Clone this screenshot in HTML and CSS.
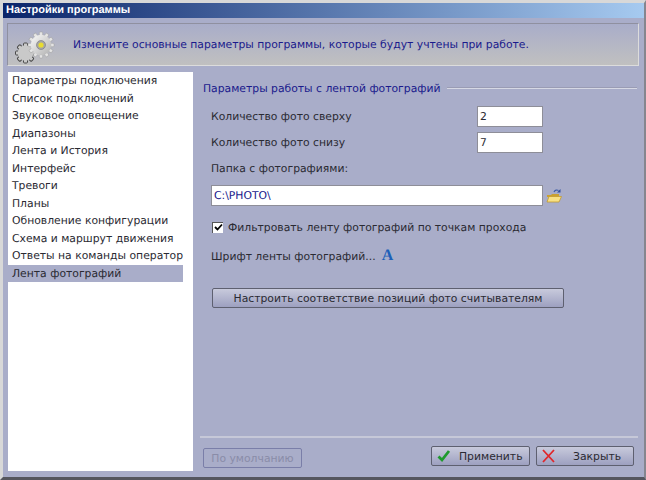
FILE: index.html
```html
<!DOCTYPE html>
<html lang="ru">
<head>
<meta charset="utf-8">
<title>Настройки программы</title>
<link rel="stylesheet" href="styles.css">
</head>
<body>
<div class="window">
  <div class="titlebar">Настройки программы</div>
  <div class="banner">
    <svg class="gears" width="40" height="34" viewBox="0 0 40 34">
      <defs>
        <linearGradient id="g1" x1="0" y1="0" x2="1" y2="1"><stop offset="0" stop-color="#fafafa"/><stop offset="1" stop-color="#b0b0b0"/></linearGradient>
      </defs>
      <g transform="translate(10.500 22)" fill="#c9c9c9" stroke="#4a4a4a" stroke-width="1">
        <rect x="-10" y="-2" width="20" height="4" rx="1"/>
        <rect x="-10" y="-2" width="20" height="4" rx="1" transform="rotate(45)"/>
        <rect x="-10" y="-2" width="20" height="4" rx="1" transform="rotate(90)"/>
        <rect x="-10" y="-2" width="20" height="4" rx="1" transform="rotate(135)"/>
        <circle r="7.800" stroke="none"/>
      </g>
      <g transform="translate(26 14)" fill="#e4e4e4" stroke="#9a9a9a" stroke-width=".5">
        <rect x="-13" y="-1.700" width="26" height="3.400" rx=".8"/>
        <rect x="-13" y="-1.700" width="26" height="3.400" rx=".8" transform="rotate(30)"/>
        <rect x="-13" y="-1.700" width="26" height="3.400" rx=".8" transform="rotate(60)"/>
        <rect x="-13" y="-1.700" width="26" height="3.400" rx=".8" transform="rotate(90)"/>
        <rect x="-13" y="-1.700" width="26" height="3.400" rx=".8" transform="rotate(120)"/>
        <rect x="-13" y="-1.700" width="26" height="3.400" rx=".8" transform="rotate(150)"/>
        <circle r="10.300" fill="url(#g1)" stroke="none"/>
        <circle r="4.500" fill="#a6a6a6" stroke="#777" stroke-width=".6"/>
        <circle r="2.600" fill="#e8dc30" stroke="none"/>
      </g>
    </svg>
    <span class="banner-text">Измените основные параметры программы, которые будут учтены при работе.</span>
  </div>
  <div class="main">
    <ul class="list">
      <li>Параметры подключения</li>
      <li>Список подключений</li>
      <li>Звуковое оповещение</li>
      <li>Диапазоны</li>
      <li>Лента и История</li>
      <li>Интерфейс</li>
      <li>Тревоги</li>
      <li>Планы</li>
      <li>Обновление конфигурации</li>
      <li>Схема и маршрут движения</li>
      <li>Ответы на команды оператор</li>
      <li class="selected">Лента фотографий</li>
    </ul>
    <div class="panel">
      <div class="group-title"><span>Параметры работы с лентой фотографий</span><i class="rule"></i></div>
      <div class="fields">
        <div class="field-row"><span>Количество фото сверху</span><div class="input small">2</div></div>
        <div class="field-row"><span>Количество фото снизу</span><div class="input small">7</div></div>
        <div class="folder-label">Папка с фотографиями:</div>
        <div class="folder-row">
          <div class="input wide">C:\PHOTO\</div>
          <svg class="folder" width="16" height="15" viewBox="0 0 16 15">
            <path d="M8 4C9 2 11 1.500 12.500 2.500" fill="none" stroke="#3a5aa8" stroke-width="1.200"/>
            <path d="M14.500 1v3.500h-3.500z" fill="#2f4f9f"/>
            <path d="M1 7h4l1-1h7v3H1z" fill="#c9a030"/>
            <path d="M1 14L3 8.500h12.500L13 14z" fill="#f8e184" stroke="#c29a30" stroke-width=".8"/>
          </svg>
        </div>
        <label class="check-row"><span class="checkbox"><svg width="9" height="9" viewBox="0 0 9 9"><path d="M1 4l2.500 2.500L8 1.500" fill="none" stroke="#000" stroke-width="1.800"/></svg></span>Фильтровать ленту фотографий по точкам прохода</label>
        <div class="font-row"><span>Шрифт ленты фотографий...</span><span class="font-a">A</span></div>
        <button class="btn map-btn">Настроить соответствие позиций фото считывателям</button>
      </div>
      <div class="footer">
        <button class="btn disabled">По умолчанию</button>
        <div class="footer-right">
          <button class="btn action"><svg width="14" height="14" viewBox="0 0 14 14"><path d="M1.500 7.500l3.500 3.500 7-9" fill="none" stroke="#1f9a2e" stroke-width="2.800"/></svg><span class="apply-label">Применить</span></button>
          <button class="btn action close-action"><svg width="14" height="14" viewBox="0 0 14 14"><path d="M1 1l11 12M12 1L1 13" fill="none" stroke="#e0262a" stroke-width="1.800"/></svg><span class="close-label">Закрыть</span></button>
        </div>
      </div>
    </div>
  </div>
</div>
</body>
</html>
```
FILE: styles.css
```css
* { box-sizing: border-box; }
html, body { margin: 0; padding: 0; }
body { width: 646px; height: 480px; overflow: hidden; font-family: "DejaVu Sans", sans-serif; text-rendering: geometricPrecision; }
.window {
  width: 646px; height: 480px;
  display: flex; flex-direction: column;
  background: #a9adc9;
  border-style: solid; border-width: 3px 2px 3px 3px;
  border-color: #d8d8d8 #85868f #55565e #d8d8d8;
  font-size: 10.800px; color: #2a2a32;
}
.titlebar {
  height: 15px; flex: none;
  padding-left: 3px;
  background: linear-gradient(90deg, #0a246a, #a6caf0);
  color: #fff; font: bold 11px/15px "Liberation Sans", sans-serif;
}
.banner {
  flex: none; height: 43px; margin: 5px 5px 0 4px;
  display: flex; align-items: center;
  border: 1px solid #dcdcdc; border-top-color: #8f90a0; border-left-color: #8f90a0;
  background: linear-gradient(180deg, #a9adc9, #c0c0c0);
}
.gears { margin: 7px 0 0 7px; flex: none; }
.banner-text { margin-left: 18px; color: #1a1a8c; white-space: nowrap; }
.main { flex: 1; display: flex; margin: 6px 0 6px 5px; min-height: 0; }
.list {
  list-style: none; margin: 0; padding: 0;
  width: 185px; flex: none; background: #fff;
  padding-right: 10px;
}
.list li { height: 17.500px; line-height: 17.500px; padding-left: 4px; white-space: nowrap; }
.list .selected { background: #a9adc9; }
.panel { flex: 1; display: flex; flex-direction: column; padding: 8px 0 0 10px; min-width: 0; }
.group-title { display: flex; align-items: center; height: 16px; color: #1a1a8c; gap: 6px; margin-right: 7px; white-space: nowrap; }
.rule { flex: 1; height: 2px; background: #d6d8e4; border-top: 1px solid #9a9cb4; }
.fields { flex: 1; padding: 10px 0 0 8px; display: flex; flex-direction: column; align-items: flex-start; }
.field-row { display: flex; align-items: center; justify-content: space-between; width: 332px; height: 21px; margin-bottom: 5px; }
.input {
  height: 21px; background: #fff; border: 1px solid #8e8e98;
  padding-left: 2px; line-height: 19px;
}
.small { width: 66px; }
.folder-label { height: 16px; line-height: 16px; margin-top: 3px; }
.folder-row { display: flex; align-items: center; gap: 3px; margin-top: 8px; }
.wide { width: 332px; color: #1a1a8c; }
.folder { flex: none; }
.check-row { display: flex; align-items: center; height: 16px; margin-top: 13px; }
.checkbox { width: 11px; height: 11px; background: #fff; border-top: 1px solid #555; border-left: 1px solid #555; margin: 0 5px 0 1px; display: flex; align-items: center; justify-content: center; }
.font-row { display: flex; align-items: center; gap: 6px; height: 18px; margin-top: 12px; }
.font-a { color: #1d5fb8; font: bold 16px/18px "Liberation Serif", serif; }
.btn {
  font: 10.800px "DejaVu Sans", sans-serif; color: #2a2a32;
  background: linear-gradient(180deg, #c8cadc, #9da0c0);
  border: 1px solid #5e6070; border-radius: 2px; padding: 0;
}
.map-btn { width: 352px; height: 20px; margin-top: 23px; margin-left: 1px; }
.footer {
  flex: none; height: 35px; margin-right: 6px;
  border-top: 2px solid #c6c8d8;
  display: flex; align-items: flex-start; justify-content: space-between;
  padding: 8px 4px 0 0; margin-left: -3px;
}
.disabled { width: 99px; height: 20px; margin-left: 3px; margin-top: 2px; background: none; border-color: #7a7ea8; color: #8a8ca8; }
.footer-right { display: flex; gap: 6px; }
.action { width: 99px; height: 20px; display: flex; align-items: center; padding-left: 5px; }
.close-action { width: 98px; }
.apply-label { margin-left: 8px; }
.close-label { margin-left: 17px; }
```
